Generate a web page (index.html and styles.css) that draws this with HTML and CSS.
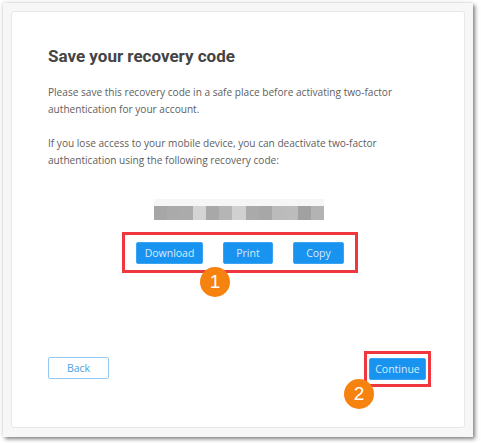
FILE: index.html
```html
<!DOCTYPE html>
<html>
<head>
<meta charset="utf-8">
<link rel="stylesheet" href="styles.css">
</head>
<body>
<div class="frame">
  <div class="card">
    <h1 class="title">Save your recovery code</h1>
    <p class="text">Please save this recovery code in a safe place before activating two-factor authentication for your account.</p>
    <p class="text">If you lose access to your mobile device, you can deactivate two-factor authentication using the following recovery code:</p>
    <div class="code">
      <div class="code-top"></div>
      <div class="code-row">
        <span style="background:#a6a6a6"></span><span style="background:#aaaaaa"></span><span style="background:#ababab"></span><span style="background:#d4d4d4"></span><span style="background:#a8a8a8"></span><span style="background:#b5b5b5"></span><span style="background:#d0d0d0"></span><span style="background:#aaaaaa"></span><span style="background:#a7a7a7"></span><span style="background:#bbbbbb"></span><span style="background:#bcbcbc"></span><span style="background:#a1a1a1"></span><span style="background:#b3b3b3"></span>
      </div>
    </div>
    <div class="actions-wrap">
      <div class="actions mark">
        <button class="btn primary dl">Download</button>
        <button class="btn primary pr">Print</button>
        <button class="btn primary cp">Copy</button>
      </div>
      <span class="badge badge-1">1</span>
    </div>
    <div class="footer">
      <button class="btn outline back">Back</button>
      <div class="continue-wrap">
        <div class="mark cont-mark">
          <button class="btn primary cont">Continue</button>
        </div>
        <span class="badge badge-2">2</span>
      </div>
    </div>
  </div>
</div>
</body>
</html>
```

FILE: styles.css
```css
* { box-sizing: border-box; }
html, body { margin: 0; padding: 0; background: #ffffff; }
body { width: 481px; height: 443px; overflow: hidden; }

.frame {
  margin: 3px 0 0 3px;
  width: 470px;
  height: 434px;
  background: #f7f7f7;
  box-shadow: 2px 2px 4px rgba(0,0,0,0.5), -1px -1px 3px rgba(0,0,0,0.08);
  padding: 8px;
}

.card {
  width: 454px;
  height: 417px;
  background: #ffffff;
  border: 1px solid #e8e8e8;
  border-radius: 3px;
  padding: 33px 36px 0 36px;
  display: flex;
  flex-direction: column;
}

.title {
  margin: 0;
  font-family: Roboto, "Liberation Sans", sans-serif;
  font-weight: 700;
  font-size: 17px;
  line-height: 22px;
  color: #444444;
}

.text {
  margin: 17px 0 0 0;
  font-family: "Open Sans", "Noto Sans", sans-serif;
  font-size: 10.1px;
  line-height: 17px;
  color: #5e5e5e;
}
.text + .text { margin-top: 17px; }

.code {
  margin: 30px 0 0 106px;
  width: 170px;
  display: flex;
  flex-direction: column;
}
.code-top { height: 7px; background: #f6f6f6; }
.code-row { display: flex; height: 14px; }
.code-row span { flex: 1; }

.actions-wrap {
  position: relative;
  margin: 12px 0 0 74px;
  width: 236px;
}
.actions {
  display: flex;
  align-items: center;
  height: 41px;
  padding: 0 11px;
  justify-content: space-between;
}
.mark { border: 3px solid #f0373d; }

.btn {
  font-family: "Open Sans", "Noto Sans", sans-serif;
  font-size: 10.5px;
  height: 22px;
  border-radius: 2px;
  padding: 0;
  cursor: pointer;
}
.primary {
  background: #1893f0;
  border: 1px solid #3aa4f2;
  color: #d8ecfc;
}
.dl { width: 67px; }
.pr { width: 50px; }
.cp { width: 51px; }

.badge {
  position: absolute;
  width: 30px;
  height: 30px;
  border-radius: 50%;
  background: #f6820f;
  color: #ffffff;
  font-family: "Liberation Sans", Arial, sans-serif;
  font-size: 19px;
  line-height: 30px;
  text-align: center;
}
.badge-1 { left: 78px; top: 35px; }
.badge-2 { left: -20px; top: 28px; }

.footer {
  margin-top: auto;
  margin-bottom: 40px;
  display: flex;
  justify-content: space-between;
  align-items: flex-end;
}
.outline {
  background: #ffffff;
  border: 1px solid #93c9f3;
  color: #4b9fe2;
  width: 61px;
}
.back { margin-bottom: 8px; }
.continue-wrap { position: relative; margin-right: -3px; }
.cont-mark {
  width: 67px;
  height: 36px;
  display: flex;
  align-items: center;
  justify-content: center;
}
.cont { width: 57px; }
```
